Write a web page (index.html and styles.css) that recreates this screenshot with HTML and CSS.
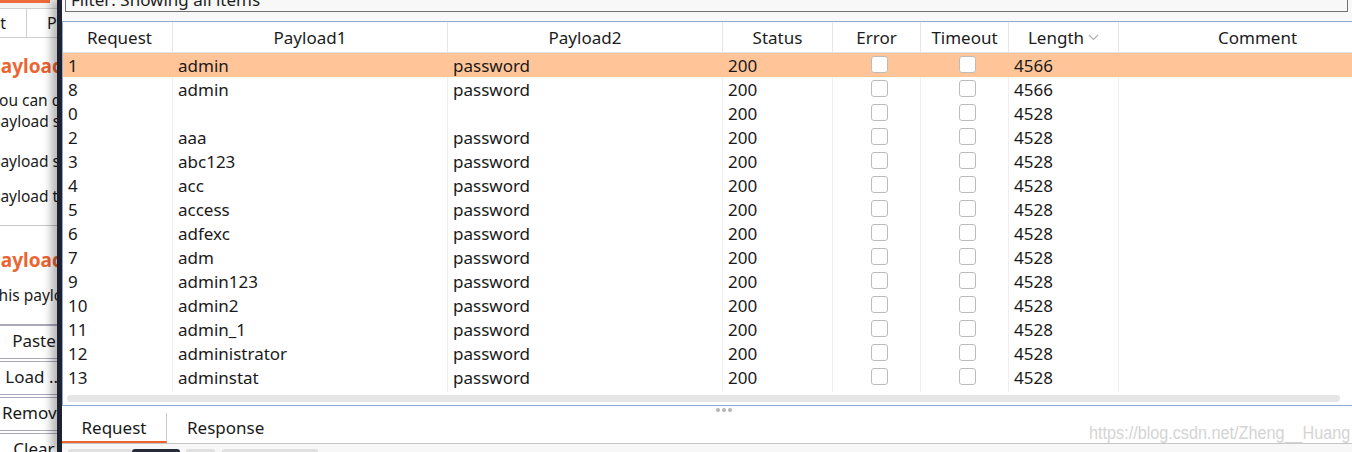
FILE: index.html
```html
<!DOCTYPE html>
<html>
<head>
<meta charset="utf-8">
<title>Intruder results</title>
<link rel="stylesheet" href="styles.css">
</head>
<body>
<div class="app">
  <aside class="left">
    <div class="ltop"><div class="accent"></div></div>
    <div class="ltabs">
      <div class="ltab first"><span>Target</span></div>
      <div class="ltab second"><span>Positions</span></div>
    </div>
    <div class="ltext">
      <div class="ltitle t1">Payload Sets</div>
      <div class="lline l1">You can define one or more payload sets.</div>
      <div class="lline l2">payload sets depends on the attack type.</div>
      <div class="lline l3">Payload set: 1</div>
      <div class="lline l4">Payload type: Simple list</div>
    </div>
    <div class="lsep"></div>
    <div class="ltext">
      <div class="ltitle t2">Payload Options [Simple list]</div>
      <div class="lline l5">This payload type lets you configure a list.</div>
    </div>
    <div class="lsep s2"></div>
    <div class="lbtns">
      <div class="lbtn">Paste</div>
      <div class="lbtn">Load ...</div>
      <div class="lbtn">Remove</div>
      <div class="lbtn">Clear</div>
    </div>
  </aside>

  <main class="win">
    <div class="filterbar">
      <div class="filter">Filter: Showing all items</div>
    </div>

    <div class="table">
      <div class="row head">
        <div class="hc">Request</div>
        <div class="hc">Payload1</div>
        <div class="hc">Payload2</div>
        <div class="hc">Status</div>
        <div class="hc">Error</div>
        <div class="hc">Timeout</div>
        <div class="hc">Length<svg class="chev" width="11" height="7" viewBox="0 0 11 7"><path d="M1 1 L5.5 5.5 L10 1" fill="none" stroke="#b0b0b0" stroke-width="1.2"/></svg></div>
        <div class="hc comment">Comment</div>
      </div>
      <div class="rows">
        <div class="row sel"><div class="c">1</div><div class="c">admin</div><div class="c">password</div><div class="c">200</div><div class="c cb"><span class="box"></span></div><div class="c cb"><span class="box"></span></div><div class="c">4566</div><div class="c"></div></div>
        <div class="row"><div class="c">8</div><div class="c">admin</div><div class="c">password</div><div class="c">200</div><div class="c cb"><span class="box"></span></div><div class="c cb"><span class="box"></span></div><div class="c">4566</div><div class="c"></div></div>
        <div class="row"><div class="c">0</div><div class="c"></div><div class="c"></div><div class="c">200</div><div class="c cb"><span class="box"></span></div><div class="c cb"><span class="box"></span></div><div class="c">4528</div><div class="c"></div></div>
        <div class="row"><div class="c">2</div><div class="c">aaa</div><div class="c">password</div><div class="c">200</div><div class="c cb"><span class="box"></span></div><div class="c cb"><span class="box"></span></div><div class="c">4528</div><div class="c"></div></div>
        <div class="row"><div class="c">3</div><div class="c">abc123</div><div class="c">password</div><div class="c">200</div><div class="c cb"><span class="box"></span></div><div class="c cb"><span class="box"></span></div><div class="c">4528</div><div class="c"></div></div>
        <div class="row"><div class="c">4</div><div class="c">acc</div><div class="c">password</div><div class="c">200</div><div class="c cb"><span class="box"></span></div><div class="c cb"><span class="box"></span></div><div class="c">4528</div><div class="c"></div></div>
        <div class="row"><div class="c">5</div><div class="c">access</div><div class="c">password</div><div class="c">200</div><div class="c cb"><span class="box"></span></div><div class="c cb"><span class="box"></span></div><div class="c">4528</div><div class="c"></div></div>
        <div class="row"><div class="c">6</div><div class="c">adfexc</div><div class="c">password</div><div class="c">200</div><div class="c cb"><span class="box"></span></div><div class="c cb"><span class="box"></span></div><div class="c">4528</div><div class="c"></div></div>
        <div class="row"><div class="c">7</div><div class="c">adm</div><div class="c">password</div><div class="c">200</div><div class="c cb"><span class="box"></span></div><div class="c cb"><span class="box"></span></div><div class="c">4528</div><div class="c"></div></div>
        <div class="row"><div class="c">9</div><div class="c">admin123</div><div class="c">password</div><div class="c">200</div><div class="c cb"><span class="box"></span></div><div class="c cb"><span class="box"></span></div><div class="c">4528</div><div class="c"></div></div>
        <div class="row"><div class="c">10</div><div class="c">admin2</div><div class="c">password</div><div class="c">200</div><div class="c cb"><span class="box"></span></div><div class="c cb"><span class="box"></span></div><div class="c">4528</div><div class="c"></div></div>
        <div class="row"><div class="c">11</div><div class="c">admin_1</div><div class="c">password</div><div class="c">200</div><div class="c cb"><span class="box"></span></div><div class="c cb"><span class="box"></span></div><div class="c">4528</div><div class="c"></div></div>
        <div class="row"><div class="c">12</div><div class="c">administrator</div><div class="c">password</div><div class="c">200</div><div class="c cb"><span class="box"></span></div><div class="c cb"><span class="box"></span></div><div class="c">4528</div><div class="c"></div></div>
        <div class="row"><div class="c">13</div><div class="c">adminstat</div><div class="c">password</div><div class="c">200</div><div class="c cb"><span class="box"></span></div><div class="c cb"><span class="box"></span></div><div class="c">4528</div><div class="c"></div></div>
        <div class="row tail"><div class="c"></div><div class="c"></div><div class="c"></div><div class="c"></div><div class="c"></div><div class="c"></div><div class="c"></div><div class="c"></div></div>
      </div>
      <div class="hscroll"><div class="thumb"></div></div>
    </div>

    <div class="lower">
      <div class="grip"><span></span><span></span><span></span></div>
      <div class="btabs">
        <div class="btab active">Request</div>
        <div class="btab">Response</div>
      </div>
      <div class="strip">
        <span class="pill p1"></span><span class="pill p2"></span><span class="pill p3"></span><span class="pill p4"></span>
      </div>
      <div class="watermark">https://blog.csdn.net/Zheng__Huang</div>
    </div>
  </main>
</div>
</body>
</html>
```

FILE: styles.css
```css
* { box-sizing: border-box; }
html, body { margin: 0; padding: 0; }
body {
  width: 1352px;
  height: 452px;
  overflow: hidden;
  background: #fff;
  color: #1a1a1a;
  font-family: "Noto Sans", "Open Sans", sans-serif;
  font-size: 17px;
}
.app { display: flex; height: 452px; }

/* ---------- left panel ---------- */
.left {
  width: 57px;
  flex: none;
  overflow: hidden;
  background: #fff;
  display: flex;
  flex-direction: column;
  white-space: nowrap;
}
.ltop { height: 8px; background: #f4f4f4; flex: none; }
.accent { width: 50px; height: 3px; background: #ee6a3a; }
.ltabs {
  display: flex;
  height: 30px;
  flex: none;
  border-top: 1px solid #cfcfcf;
  border-bottom: 1px solid #cfcfcf;
  font-size: 16px;
}
.ltab { line-height: 28px; overflow: hidden; }
.ltab.first {
  width: 27px;
  flex: none;
  display: flex;
  justify-content: flex-end;
  padding-right: 20px;
  border-right: 1px solid #cfcfcf;
}
.ltab.second { padding-left: 20px; }

.ltext { margin-left: -10px; }
.ltitle {
  color: #ec6432;
  font-weight: 700;
  font-size: 19px;
  line-height: 24px;
}
.t1 { margin-top: 16px; margin-left: -1px; }
.t2 { margin-top: 22px; margin-left: -1px; }
.lline { line-height: 21px; font-size: 15.5px; }
.l1 { margin-top: 12px; margin-left: 1px; }
.l2 { margin-top: 0; margin-left: 1px; }
.l3 { margin-top: 19px; margin-left: 1px; }
.l4 { margin-top: 14px; margin-left: 1px; }
.l5 { margin-top: 13px; margin-left: 0; }
.lsep { height: 1px; background: #c6c6c6; margin-top: 18px; flex: none; }
.lsep.s2 { margin-top: 18px; background: #a9a9bb; }

.lbtns { display: flex; flex-direction: column; gap: 2px; }
.lbtn {
  width: 70px;
  margin-left: -1px;
  height: 34px;
  flex: none;
  border: 1px solid #a9a9bb;
  background: #fff;
  text-align: center;
  line-height: 29px;
}

/* ---------- main window ---------- */
.win {
  flex: 1;
  position: relative;
  z-index: 1;
  border-left: 5px solid #1e2130;
  box-shadow: -6px 0 8px rgba(0, 0, 0, 0.28);
  background: #fff;
  display: flex;
  flex-direction: column;
  min-width: 0;
}
.filterbar {
  height: 21px;
  flex: none;
  background: #f8f8f8;
  padding: 0 4px 0 3px;
  overflow: hidden;
}
.filter {
  margin-top: -9px;
  height: 21px;
  border: 1px solid #707070;
  background: #f8f8f8;
  padding-left: 5px;
  line-height: 15px;
  color: #1e1e1e;
}

.table {
  height: 385px;
  flex: none;
  border: 1px solid #8eaad0;
  border-right: none;
  display: flex;
  flex-direction: column;
}
.row {
  display: grid;
  grid-template-columns: 110px 275px 275px 110px 88px 88px 110px 1fr;
  height: 24px;
}
.row.head {
  height: 31px;
  border-bottom: 1px solid #e3e3e3;
}
.hc {
  border-right: 1px solid #e6e6e6;
  padding-top: 2px;
  line-height: 28px;
  color: #1c1c1c;
  display: flex;
  justify-content: center;
  align-items: center;
  gap: 4px;
}
.hc:first-child { padding-left: 4px; }
.hc:last-child { border-right: none; }
.hc.comment { padding-left: 44px; }
.chev { margin-top: -2px; }

.rows { flex: 1; display: flex; flex-direction: column; }
.c {
  border-right: 1px solid #efefef;
  padding-left: 5px;
  padding-top: 2px;
  line-height: 22px;
  white-space: nowrap;
  overflow: hidden;
}
.c:last-child { border-right: none; }
.row.sel { background: #ffc598; }
.row.sel .c { border-right-color: transparent; }
.row.tail { height: 3px; flex: none; }
.c.cb {
  display: flex;
  align-items: center;
  justify-content: center;
  padding-left: 5px;
  padding-top: 0;
}
.box {
  width: 17px;
  height: 17px;
  border: 1px solid #bcbcbc;
  border-radius: 3px;
  background: #fff;
  margin-top: -1px;
}
.hscroll {
  height: 13px;
  flex: none;
  padding: 3px 12px 3px 4px;
}
.thumb { height: 7px; border-radius: 4px; background: #e6e6e6; }

/* ---------- lower pane ---------- */
.lower { flex: 1; position: relative; display: flex; flex-direction: column; }
.grip {
  height: 7px;
  flex: none;
  display: flex;
  align-items: center;
  gap: 2px;
  padding-left: 654px;
}
.grip span { width: 4px; height: 4px; border-radius: 50%; background: #b4b4b4; }
.btabs {
  height: 31px;
  flex: none;
  display: flex;
  border-bottom: 1px solid #c6c6c6;
}
.btab { line-height: 29px; }
.btab.active {
  width: 105px;
  text-align: center;
  border-right: 1px solid #c9c9c9;
  border-bottom: 2px solid #f0622c;
}
.btab + .btab { padding-left: 20px; }
.strip {
  flex: 1;
  background: #f7f7f7;
  display: flex;
  align-items: flex-end;
  padding-left: 6px;
}
.pill { height: 3px; border-radius: 5px 5px 0 0; background: #e0e0e0; }
.p1 { width: 64px; }
.p2 { width: 48px; background: #262a38; margin-right: 6px; }
.p3 { width: 29px; margin-right: 7px; }
.p4 { width: 96px; }
.watermark {
  position: absolute;
  right: 2px;
  top: 16px;
  font-family: "Liberation Sans", Arial, sans-serif;
  font-size: 18px;
  line-height: 22px;
  color: #d4d4d4;
  transform: scaleX(0.9);
  transform-origin: right center;
  white-space: nowrap;
}
```
